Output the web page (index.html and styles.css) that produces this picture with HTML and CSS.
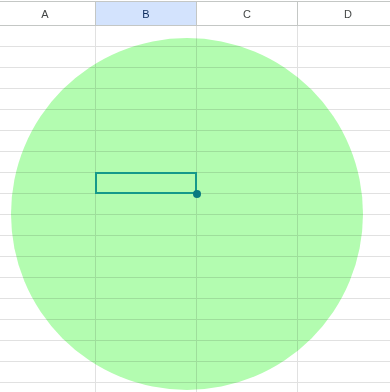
FILE: index.html
```html
<!DOCTYPE html>
<html>
<head>
<meta charset="utf-8">
<link rel="stylesheet" href="styles.css">
</head>
<body>
<div class="sheet">
  <div class="grid">
    <div class="hcell">A</div>
    <div class="hcell hsel">B</div>
    <div class="hcell">C</div>
    <div class="hcell">D</div>
  </div>
  <div class="grid body-grid" id="rows"></div>
  <div class="circle"></div>
  <div class="selection"><span class="handle"></span></div>
</div>
<script>
  var g = document.getElementById('rows');
  for (var i = 0; i < 18 * 4; i++) {
    var c = document.createElement('div');
    c.className = 'cell';
    g.appendChild(c);
  }
</script>
</body>
</html>
```
FILE: styles.css
```css
html, body {
  margin: 0;
  padding: 0;
  background: #ffffff;
  overflow: hidden;
}
.sheet {
  position: relative;
  width: 390px;
  height: 392px;
  overflow: hidden;
  padding-top: 1px;
  box-sizing: border-box;
  font-family: "Liberation Sans", Arial, sans-serif;
}
.grid {
  display: grid;
  grid-template-columns: repeat(4, 101px);
  margin-left: -5px;
}
.hcell {
  height: 23px;
  border-top: 1px solid #c4c7c5;
  border-bottom: 1px solid #c4c7c5;
  border-right: 1px solid #c4c7c5;
  display: flex;
  align-items: center;
  justify-content: center;
  font-size: 11px;
  color: #444746;
  background: #ffffff;
}
.hsel {
  background: #d3e3fd;
  color: #0b2a5b;
}
.cell {
  height: 20px;
  border-right: 1px solid #e1e1e1;
  border-bottom: 1px solid #e1e1e1;
}
.circle {
  position: absolute;
  left: 11px;
  top: 38px;
  width: 352px;
  height: 352px;
  border-radius: 50%;
  background: #b3fcb0;
  mix-blend-mode: multiply;
}
.selection {
  position: absolute;
  left: 95px;
  top: 172px;
  width: 102px;
  height: 22px;
  box-sizing: border-box;
  border: 2px solid #15998a;
}
.handle {
  position: absolute;
  right: -6px;
  bottom: -6px;
  width: 8px;
  height: 8px;
  border-radius: 50%;
  background: #0a7a80;
}
```
